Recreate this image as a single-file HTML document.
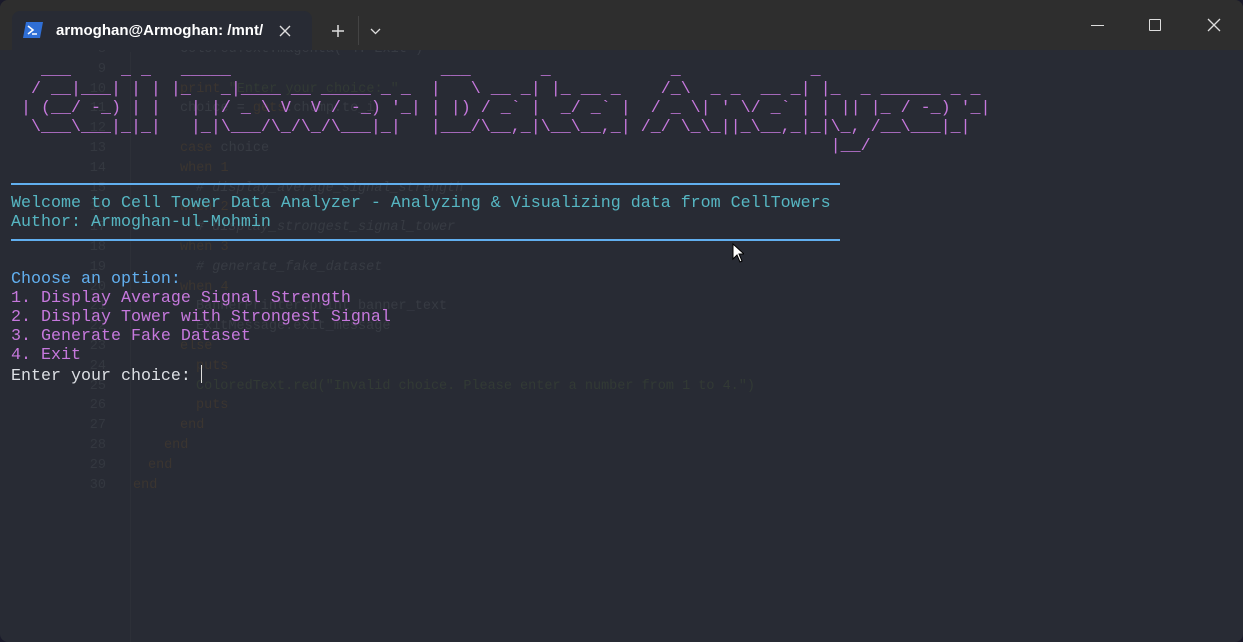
<!DOCTYPE html>
<html><head><meta charset="utf-8"><style>
html,body{margin:0;padding:0;width:1243px;height:642px;overflow:hidden;background:#1a1a2a;}
.win{position:absolute;left:0;top:0;width:1243px;height:642px;background:#282b34;border-radius:8px;overflow:hidden;}
.bar{position:absolute;left:0;top:0;width:1243px;height:50px;background:#2e2e2e;}
.tab{position:absolute;left:12px;top:11px;width:300px;height:39px;background:#282b34;border-radius:8px 8px 0 0;}
.title{position:absolute;left:56px;top:22px;font:bold 15px "Liberation Sans",sans-serif;color:#fff;white-space:nowrap;width:208px;overflow:hidden;}
.ghost{position:absolute;left:0;top:40px;font:13.5px/19.8px "Liberation Mono",monospace;color:#373b43;white-space:pre;}
.ln{position:absolute;left:80px;width:26px;text-align:right;color:#343840}
.cd{position:absolute;}
.term{position:absolute;left:11px;top:60.5px;font:16.67px/19px "Liberation Mono",monospace;white-space:pre;color:#dcdfe4;}
.p{color:#c678dd}.c{color:#56b6c2}.b{color:#61afef}
.hr{position:absolute;left:11px;width:829px;height:2px;background:#61afef;}
</style></head><body><div class="win">
<div class="ghost">
<div style="position:absolute;left:130px;top:12px;width:1px;height:600px;background:#2d3038"></div>
<span class="ln" style="top:0">8</span><span class="cd" style="left:180px;top:0">ColoredText.magenta("4. Exit")</span>
<span class="ln" style="top:19.8px">9</span>
<span class="ln" style="top:39.6px">10</span><span class="cd" style="left:180px;top:39.6px"><span style="color:#3b3530">print</span> <span style="color:#323a35">"Enter your choice: "</span></span>
<span class="ln" style="top:59.4px">11</span><span class="cd" style="left:180px;top:59.4px">choice = <span style="color:#3b3530">gets</span>.chomp.to_i</span>
<span class="ln" style="top:79.2px">12</span>
<span class="ln" style="top:99px">13</span><span class="cd" style="left:180px;top:99px"><span style="color:#3b3530">case</span> choice</span>
<span class="ln" style="top:118.8px">14</span><span class="cd" style="left:180px;top:118.8px;color:#3b3530">when 1</span>
<span class="ln" style="top:138.6px">15</span><span class="cd" style="left:196px;top:138.6px;font-style:italic"># display_average_signal_strength</span>
<span class="ln" style="top:158.4px">16</span><span class="cd" style="left:180px;top:158.4px;color:#3b3530">when 2</span>
<span class="ln" style="top:178.2px">17</span><span class="cd" style="left:196px;top:178.2px;font-style:italic"># display_strongest_signal_tower</span>
<span class="ln" style="top:198px">18</span><span class="cd" style="left:180px;top:198px;color:#3b3530">when 3</span>
<span class="ln" style="top:217.8px">19</span><span class="cd" style="left:196px;top:217.8px;font-style:italic"># generate_fake_dataset</span>
<span class="ln" style="top:237.6px">20</span><span class="cd" style="left:180px;top:237.6px;color:#3b3530">when 4</span>
<span class="ln" style="top:257.4px">21</span><span class="cd" style="left:196px;top:257.4px">BannerPrinter.print_banner_text</span>
<span class="ln" style="top:277.2px">22</span><span class="cd" style="left:196px;top:277.2px">ExitMessage.exit_message</span>
<span class="ln" style="top:297px">23</span><span class="cd" style="left:180px;top:297px;color:#3b3530">else</span>
<span class="ln" style="top:316.8px">24</span><span class="cd" style="left:196px;top:316.8px;color:#3b3530">puts</span>
<span class="ln" style="top:336.6px">25</span><span class="cd" style="left:196px;top:336.6px;color:#323a35">ColoredText.red("Invalid choice. Please enter a number from 1 to 4.")</span>
<span class="ln" style="top:356.4px">26</span><span class="cd" style="left:196px;top:356.4px;color:#3b3530">puts</span>
<span class="ln" style="top:376.2px">27</span><span class="cd" style="left:180px;top:376.2px;color:#3b3530">end</span>
<span class="ln" style="top:396px">28</span><span class="cd" style="left:164px;top:396px;color:#3b3530">end</span>
<span class="ln" style="top:415.8px">29</span><span class="cd" style="left:148px;top:415.8px;color:#3b3530">end</span>
<span class="ln" style="top:435.6px">30</span><span class="cd" style="left:133px;top:435.6px;color:#3b3530">end</span>
</div>
<div class="term"><span class="p">   ___     _ _   _____                     ___       _            _             _
  / __|___| | | |_   _|____ __ _____ _ _  |   \ __ _| |_ __ _    /_\  _ _  __ _| |_  _ ______ _ _
 | (__/ -_) | |   | |/ _ \ V  V / -_) '_| | |) / _` |  _/ _` |  / _ \| ' \/ _` | | || |_ / -_) '_|
  \___\___|_|_|   |_|\___/\_/\_/\___|_|   |___/\__,_|\__\__,_| /_/ \_\_||_\__,_|_|\_, /__\___|_|
                                                                                  |__/</span>


<span class="c">Welcome to Cell Tower Data Analyzer - Analyzing &amp; Visualizing data from CellTowers
Author: Armoghan-ul-Mohmin</span>


<span class="b">Choose an option:</span>
<span class="p">1. Display Average Signal Strength
2. Display Tower with Strongest Signal
3. Generate Fake Dataset
4. Exit</span>
Enter your choice: <span style="display:inline-block;width:1px;height:18px;background:#ddd;vertical-align:-3px"></span></div>
<div class="hr" style="top:183px"></div>
<div class="hr" style="top:239px"></div>
<div class="bar"></div>
<div class="tab"></div>
<svg style="position:absolute;left:23px;top:22px" width="20" height="16" viewBox="0 0 20 16"><path d="M3 0H20L17 16H0Z" fill="#2f6fd6"/><path d="M5 4L10 8L5 12" stroke="#fff" stroke-width="1.6" fill="none"/><path d="M9 12H14" stroke="#fff" stroke-width="1.6"/></svg>
<div class="title">armoghan@Armoghan: /mnt/</div>
<svg style="position:absolute;left:279px;top:25px" width="12" height="12"><path d="M1 1L11 11M11 1L1 11" stroke="#ddd" stroke-width="1.4"/></svg>
<svg style="position:absolute;left:331px;top:24px" width="14" height="14"><path d="M7 1V13M1 7H13" stroke="#ddd" stroke-width="1.5"/></svg>
<div style="position:absolute;left:358px;top:16px;width:1px;height:29px;background:#444"></div>
<svg style="position:absolute;left:370px;top:28px" width="11" height="7"><path d="M1 1L5.5 5.5L10 1" stroke="#ddd" stroke-width="1.3" fill="none"/></svg>
<div style="position:absolute;left:1091px;top:25px;width:13px;height:1px;background:#ddd"></div>
<div style="position:absolute;left:1149px;top:19px;width:10px;height:10px;border:1.3px solid #ddd;border-radius:1px"></div>
<svg style="position:absolute;left:1207px;top:18px" width="14" height="14"><path d="M1 1L13 13M13 1L1 13" stroke="#ddd" stroke-width="1.3"/></svg>
<svg style="position:absolute;left:732px;top:243px" width="12" height="20"><path d="M1 1V16L5 12L8 19L10 18L7 11H12Z" fill="#fff" stroke="#000" stroke-width="1"/></svg>
</div></body></html>
